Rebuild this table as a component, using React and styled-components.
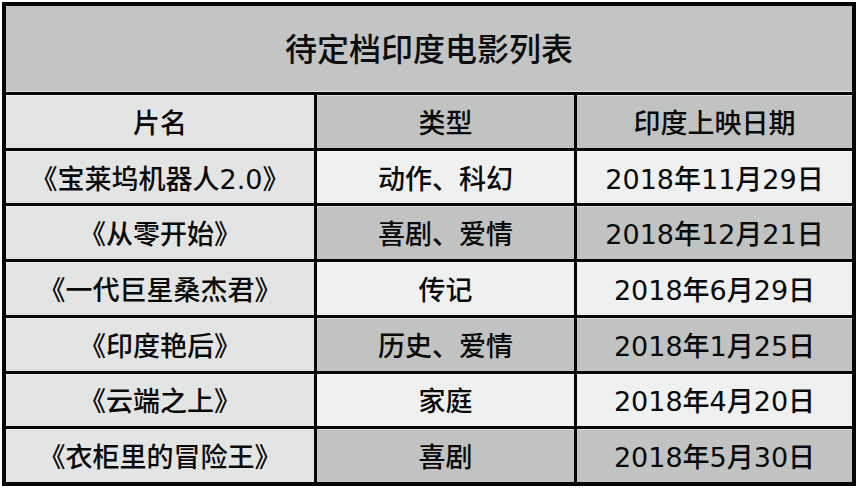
import React from 'react'
import styled, { createGlobalStyle } from 'styled-components'

const GlobalStyle = createGlobalStyle`
  html, body {
    margin: 0;
    padding: 0;
    background: #ffffff;
  }
  body {
    font-family: "DejaVu Sans", "Noto Sans CJK SC", sans-serif;
  }
`

const Page = styled.div`
  width: 860px;
  height: 492px;
  padding: 2px 0 0 2px;
  box-sizing: border-box;
`

const Table = styled.div`
  width: 854px;
  height: 484px;
  box-sizing: border-box;
  border: 4px solid #050505;
  background: #050505;
  display: grid;
  grid-template-columns: 308px 257px 275px;
  grid-template-rows: 86px repeat(7, 1fr);
  gap: 3px;
`

const Title = styled.div`
  grid-column: 1 / span 3;
  display: flex;
  align-items: center;
  justify-content: center;
  padding-bottom: 4px;
  background: #c3c5c4;
  box-shadow: inset 0 -1px 0 #e2e3e3;
  font-size: 32px;
  font-weight: 500;
  color: #0d0d0d;
`

const tones = {
  first: '#e3e4e4',
  light: '#eff0f0',
  dark: '#c1c3c2'
}

const Cell = styled.div`
  display: flex;
  align-items: center;
  justify-content: center;
  background: ${p => tones[p.$tone]};
  box-shadow: inset 0 1px 0 rgba(255, 255, 255, 0.45);
  font-size: 27px;
  font-weight: 500;
  color: #0a0a0a;
  white-space: nowrap;
`

const header = ['片名', '类型', '印度上映日期']

const movies = [
  { name: '《宝莱坞机器人2.0》', genre: '动作、科幻', date: '2018年11月29日' },
  { name: '《从零开始》', genre: '喜剧、爱情', date: '2018年12月21日' },
  { name: '《一代巨星桑杰君》', genre: '传记', date: '2018年6月29日' },
  { name: '《印度艳后》', genre: '历史、爱情', date: '2018年1月25日' },
  { name: '《云端之上》', genre: '家庭', date: '2018年4月20日' },
  { name: '《衣柜里的冒险王》', genre: '喜剧', date: '2018年5月30日' }
]

export default () => {
  return (
    <>
      <GlobalStyle />
      <Page>
        <Table>
          <Title>待定档印度电影列表</Title>
          {header.map((h, i) => (
            <Cell key={h} $tone={i === 0 ? 'first' : 'dark'}>
              {h}
            </Cell>
          ))}
          {movies.map(({ name, genre, date }, i) => {
            const tone = i % 2 === 1 ? 'dark' : 'light'
            return (
              <React.Fragment key={name}>
                <Cell $tone="first">{name}</Cell>
                <Cell $tone={tone}>{genre}</Cell>
                <Cell $tone={tone}>{date}</Cell>
              </React.Fragment>
            )
          })}
        </Table>
      </Page>
    </>
  )
}
